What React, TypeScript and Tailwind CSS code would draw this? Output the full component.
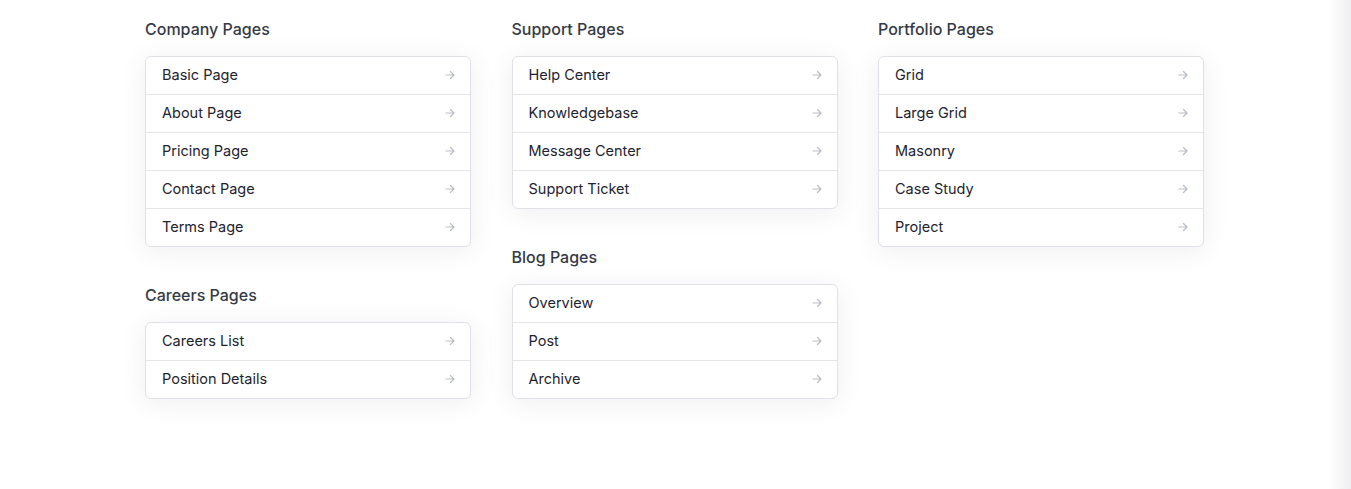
import React from 'react';

type Section = { title: string; links: string[] };

const columns: Section[][] = [
  [
    { title: 'Company Pages', links: ['Basic Page', 'About Page', 'Pricing Page', 'Contact Page', 'Terms Page'] },
    { title: 'Careers Pages', links: ['Careers List', 'Position Details'] },
  ],
  [
    { title: 'Support Pages', links: ['Help Center', 'Knowledgebase', 'Message Center', 'Support Ticket'] },
    { title: 'Blog Pages', links: ['Overview', 'Post', 'Archive'] },
  ],
  [{ title: 'Portfolio Pages', links: ['Grid', 'Large Grid', 'Masonry', 'Case Study', 'Project'] }],
];

function Arrow() {
  return (
    <svg width="10" height="10" viewBox="0 0 10 10" fill="none" stroke="#b9bdc8" strokeWidth="1.2" strokeLinecap="round" strokeLinejoin="round">
      <path d="M1 5h8M5.5 1.5 9 5 5.5 8.5" />
    </svg>
  );
}

function MenuSection({ section }: { section: Section }) {
  return (
    <div className="flex flex-col">
      <h3 className="h-6 leading-6 text-[16px] font-medium text-[#343a46] mb-[15px]">{section.title}</h3>
      <ul className="bg-white border border-[#dfe1e6] rounded-[6px] shadow-[0_4px_28px_rgba(30,35,50,0.07)]">
        {section.links.map((link, i) => (
          <li
            key={link}
            className={`flex items-center justify-between pl-4 pr-[15px] pb-[2px] text-[14.5px] text-[#1e2330] ${
              i > 0 ? 'h-[38px] border-t border-[#e3e5e9]' : 'h-[37px]'
            }`}
          >
            <span>{link}</span>
            <Arrow />
          </li>
        ))}
      </ul>
    </div>
  );
}

export default function App() {
  return (
    <div className="w-[1351px] h-[489px] flex bg-white overflow-hidden" style={{ fontFamily: 'Inter, "Noto Sans", sans-serif' }}>
      <div className="flex-1 pl-[145px] pt-[17px]">
        <div className="flex gap-[40.5px] items-start">
          {columns.map((col, ci) => (
            <div key={ci} className="w-[326px] flex flex-col gap-[36px]">
              {col.map((s) => (
                <MenuSection key={s.title} section={s} />
              ))}
            </div>
          ))}
        </div>
      </div>
      <div className="w-[22px] bg-gradient-to-r from-white to-[#eeeef1]" />
    </div>
  );
}
